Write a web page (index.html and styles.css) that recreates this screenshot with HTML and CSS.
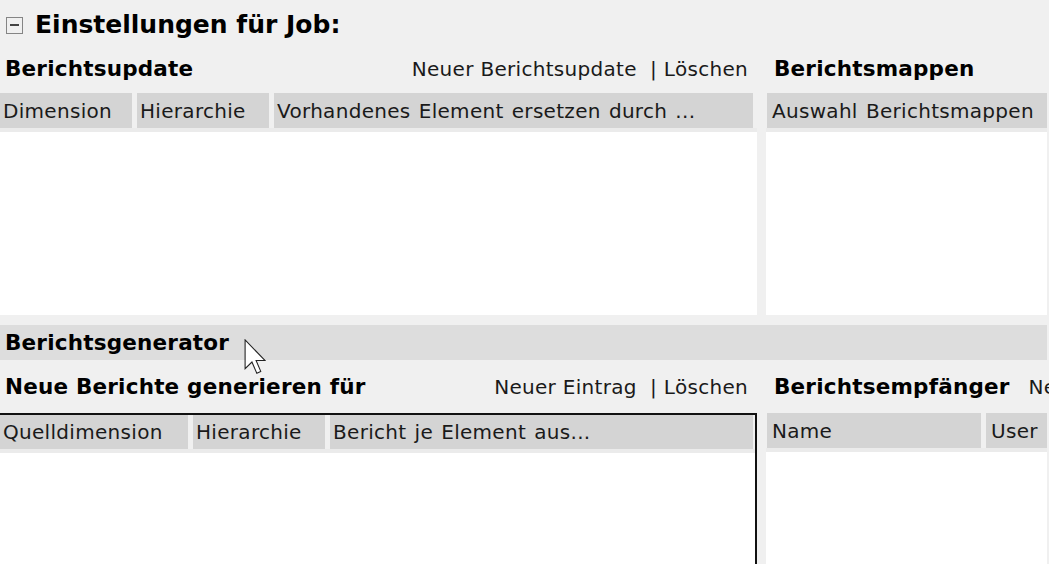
FILE: index.html
```html
<!DOCTYPE html>
<html lang="de">
<head>
  <meta charset="UTF-8" />
  <title>Einstellungen für Job</title>
  <link rel="stylesheet" href="styles.css">
</head>
<body>
  <div class="page">

    <!-- Titel -->
    <div class="title"><span class="toggle"></span>Einstellungen für Job:</div>

    <!-- Berichtsupdate / Berichtsmappen -->
    <div class="split">
      <section class="panel left">
        <div class="toolbar">
          <span class="label">Berichtsupdate</span>
          <span class="actions">Neuer Berichtsupdate&nbsp;&nbsp;| Löschen</span>
        </div>
        <div class="grid">
          <div class="head">
            <div class="col w-dim">Dimension</div>
            <div class="col w-hier">Hierarchie</div>
            <div class="col grow">Vorhandenes Element ersetzen durch ...</div>
          </div>
          <div class="body top-body"></div>
        </div>
      </section>
      <section class="panel right">
        <div class="toolbar">
          <span class="label">Berichtsmappen</span>
        </div>
        <div class="grid">
          <div class="head">
            <div class="col grow">Auswahl Berichtsmappen</div>
          </div>
          <div class="body top-body"></div>
        </div>
      </section>
    </div>

    <!-- Berichtsgenerator -->
    <div class="bar">Berichtsgenerator</div>

    <div class="split">
      <section class="panel left">
        <div class="toolbar tall">
          <span class="label">Neue Berichte generieren für</span>
          <span class="actions">Neuer Eintrag&nbsp;&nbsp;| Löschen</span>
        </div>
        <div class="grid framed">
          <div class="head">
            <div class="col w-src">Quelldimension</div>
            <div class="col w-hier">Hierarchie</div>
            <div class="col grow">Bericht je Element aus...</div>
          </div>
          <div class="body bottom-body"></div>
        </div>
      </section>
      <section class="panel right">
        <div class="toolbar tall">
          <span class="label">Berichtsempfänger</span>
          <span class="more">Neuer Eintrag</span>
        </div>
        <div class="grid">
          <div class="head">
            <div class="col w-name">Name</div>
            <div class="col grow">User ID</div>
          </div>
          <div class="body bottom-body"></div>
        </div>
      </section>
    </div>

    <!-- Mauszeiger -->
    <svg class="cursor" width="22" height="36" viewBox="0 0 12 20">
      <path d="M0.5 0.5 L0.5 16.5 L4.3 12.8 L7 19 L9.2 18 L6.6 11.9 L11.5 11.9 Z" fill="#fff" stroke="#222" stroke-width="0.6" stroke-linejoin="miter"/>
    </svg>
  </div>
</body>
</html>
```

FILE: styles.css
```css
body {
  margin: 0;
  background: #f0f0f0;
  font-family: "DejaVu Sans", Verdana, sans-serif;
  font-size: 20px;
  letter-spacing: 0.3px;
  word-spacing: 1.5px;
  color: #1a1a1a;
}

.page {
  position: relative;
  width: 1049px;
  height: 564px;
  overflow: hidden;
}

/* Titel */
.title {
  height: 46px;
  display: flex;
  align-items: center;
  padding-top: 2px;
  box-sizing: border-box;
  font-weight: bold;
  font-size: 25px;
  letter-spacing: 0;
  word-spacing: 0;
  color: #000;
}

.toggle {
  width: 15px;
  height: 15px;
  border: 1px solid #858585;
  margin: 2px 12px 0 6px;
  display: flex;
  align-items: center;
  justify-content: center;
}

.toggle::before {
  content: "";
  width: 9px;
  height: 2px;
  background: #444;
}

/* Spalten */
.split {
  display: flex;
  gap: 9px;
  width: 1047px;
}

.panel.left { width: 757px; }
.panel.right { flex: 1; min-width: 0; }

.toolbar {
  height: 47px;
  display: flex;
  align-items: center;
  padding: 0 0 2px 5px;
  box-sizing: border-box;
  white-space: nowrap;
}

.toolbar.tall {
  height: 53px;
  padding-bottom: 0;
}

.panel.right .toolbar { padding-left: 8px; }

.label {
  font-weight: bold;
  font-size: 21.5px;
  letter-spacing: 0.2px;
  word-spacing: 0;
  color: #000;
}

.actions {
  margin-left: auto;
  padding-right: 9px;
  word-spacing: 0;
}

.more { margin-left: 19px; }

/* Tabellen */
.grid {
  display: flex;
  flex-direction: column;
}

.head {
  height: 35px;
  display: flex;
  gap: 5px;
  padding-right: 4px;
  border-bottom: 4px solid #ebebeb;
}

.panel.right .head {
  padding: 0 0 0 1px;
}

.col {
  background: #d4d4d4;
  display: flex;
  align-items: center;
  padding-left: 3px;
  white-space: nowrap;
  overflow: hidden;
  box-sizing: border-box;
}

.col.grow { flex: 1; }
.w-dim { width: 132px; }
.w-hier { width: 132px; }
.w-src { width: 188px; }
.w-name { width: 214px; }

.panel.right .col { padding-left: 5px; }

.body { background: #fff; }
.top-body { height: 183px; }
.bottom-body { height: 112px; }

.grid.framed {
  border-top: 2px solid #111;
  border-right: 2px solid #111;
}

.grid.framed .head {
  height: 34px;
  padding-right: 2px;
}

/* Berichtsgenerator */
.bar {
  margin-top: 10px;
  width: 1047px;
  height: 35px;
  background: #dddddd;
  display: flex;
  align-items: center;
  padding-left: 5px;
  box-sizing: border-box;
  font-weight: bold;
  font-size: 21.5px;
  letter-spacing: 0.2px;
  word-spacing: 0;
  color: #000;
}

.cursor {
  position: absolute;
  left: 244px;
  top: 339px;
}
```
